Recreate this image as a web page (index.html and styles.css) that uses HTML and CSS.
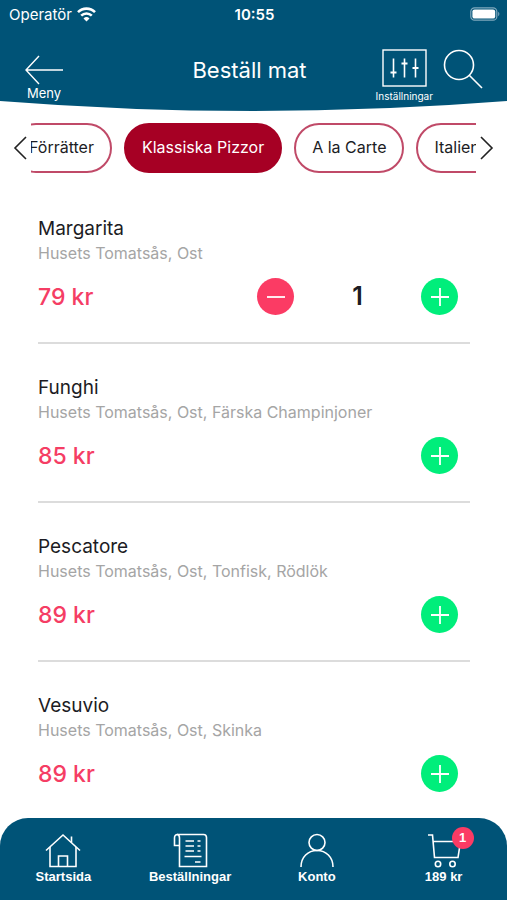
FILE: index.html
```html
<!DOCTYPE html>
<html lang="sv">
<head>
    <meta charset="UTF-8">
    <meta name="viewport" content="width=device-width, initial-scale=1.0">
    <title>Beställ mat</title>
    <link rel="stylesheet" href="styles.css">
</head>
<body>

<header class="header">
    <div class="status-bar">
        <span class="carrier">Operatör
            <svg width="19" height="15" viewBox="0 0 19 15" fill="none" stroke="#fff" stroke-width="2.6">
                <path d="M1 5.2a12 12 0 0 1 17 0"/>
                <path d="M4.2 8.6a7.6 7.6 0 0 1 10.6 0"/>
                <path d="M9.5 14.6L6.5 11.4a4.3 4.3 0 0 1 6 0z" fill="#fff" stroke="none"/>
            </svg>
        </span>
        <span class="clock">10:55</span>
        <span class="battery">
            <svg width="30" height="14" viewBox="0 0 30 14">
                <rect x="0.8" y="0.8" width="26" height="12.4" rx="3.8" fill="none" stroke="#7fa9bd" stroke-width="1.2"/>
                <rect x="2.4" y="2.4" width="22.8" height="9.2" rx="2.2" fill="#fff"/>
                <path d="M28.2 4.8c1.6 0.7 1.6 3.7 0 4.4z" fill="#7fa9bd"/>
            </svg>
        </span>
    </div>
    <div class="nav-bar">
        <button class="nav-button menu-button" type="button">
            <svg width="40" height="30" viewBox="0 0 40 30" fill="none" stroke="#fff" stroke-width="1.4">
                <path d="M39 15H2M15 1L2 15l13 14"/>
            </svg>
            <span>Meny</span>
        </button>
        <h1>Beställ mat</h1>
        <div class="nav-actions">
            <button class="nav-button settings-button" type="button">
                <svg width="45" height="38" viewBox="0 0 45 38" fill="none" stroke="#fff" stroke-width="1.4">
                    <rect x="1" y="1" width="43" height="36"/>
                    <path d="M11.5 9.5v19M22.5 9.5v19M33.5 9.5v19" stroke-width="1.6"/>
                    <path d="M8.5 23.5h6M19.5 14.5h6M30.5 19h6" stroke-width="2"/>
                </svg>
                <span>Inställningar</span>
            </button>
            <button class="nav-button search-button" type="button" aria-label="Sök">
                <svg width="40" height="40" viewBox="0 0 40 40" fill="none" stroke="#fff" stroke-width="1.6">
                    <circle cx="16" cy="16" r="14.500"/>
                    <path d="M26 26l13 13"/>
                </svg>
            </button>
        </div>
    </div>
</header>
<svg class="curve" viewBox="0 0 100 10" preserveAspectRatio="none">
    <path d="M0 0Q50 20 100 0z" fill="#005377"/>
</svg>

<nav class="categories">
    <button class="scroll-button" type="button" aria-label="Föregående">
        <svg width="14" height="24" viewBox="0 0 14 24" fill="none" stroke="#222" stroke-width="1.6">
            <path d="M13 1L2 12l11 11"/>
        </svg>
    </button>
    <div class="category-list">
        <button class="category" type="button">Förrätter</button>
        <button class="category active" type="button">Klassiska Pizzor</button>
        <button class="category" type="button">A la Carte</button>
        <button class="category" type="button">Italienska</button>
    </div>
    <button class="scroll-button" type="button" aria-label="Nästa">
        <svg width="14" height="24" viewBox="0 0 14 24" fill="none" stroke="#222" stroke-width="1.6">
            <path d="M1 1l11 11L1 23"/>
        </svg>
    </button>
</nav>

<main class="dishes">
    <article class="dish">
        <h2>Margarita</h2>
        <p>Husets Tomatsås, Ost</p>
        <div class="dish-row">
            <span class="price">79 kr</span>
            <div class="counter">
                <button class="round minus" type="button" aria-label="Ta bort Margarita"><svg width="20" height="20" viewBox="0 0 20 20"><path d="M1 10h18" stroke="#fff" stroke-width="1.8"/></svg></button>
                <span class="quantity">1</span>
                <button class="round plus" type="button" aria-label="Lägg till Margarita"><svg width="20" height="20" viewBox="0 0 20 20"><path d="M1 10h18M10 1v18" stroke="#fff" stroke-width="1.8"/></svg></button>
            </div>
        </div>
    </article>
    <article class="dish">
        <h2>Funghi</h2>
        <p>Husets Tomatsås, Ost, Färska Champinjoner</p>
        <div class="dish-row">
            <span class="price">85 kr</span>
            <button class="round plus" type="button" aria-label="Lägg till Funghi"><svg width="20" height="20" viewBox="0 0 20 20"><path d="M1 10h18M10 1v18" stroke="#fff" stroke-width="1.8"/></svg></button>
        </div>
    </article>
    <article class="dish">
        <h2>Pescatore</h2>
        <p>Husets Tomatsås, Ost, Tonfisk, Rödlök</p>
        <div class="dish-row">
            <span class="price">89 kr</span>
            <button class="round plus" type="button" aria-label="Lägg till Pescatore"><svg width="20" height="20" viewBox="0 0 20 20"><path d="M1 10h18M10 1v18" stroke="#fff" stroke-width="1.8"/></svg></button>
        </div>
    </article>
    <article class="dish">
        <h2>Vesuvio</h2>
        <p>Husets Tomatsås, Ost, Skinka</p>
        <div class="dish-row">
            <span class="price">89 kr</span>
            <button class="round plus" type="button" aria-label="Lägg till Vesuvio"><svg width="20" height="20" viewBox="0 0 20 20"><path d="M1 10h18M10 1v18" stroke="#fff" stroke-width="1.8"/></svg></button>
        </div>
    </article>
</main>

<nav class="tab-bar">
    <a class="tab" href="#start">
        <svg width="36" height="36" viewBox="0 0 36 36" fill="none" stroke="#fff" stroke-width="1.6">
            <path d="M1 17.500L18 2l17 15.500"/>
            <path d="M5 14v19.500h26V14"/>
            <path d="M13.500 33.500V23h9v10.500M26.500 9.500V3.500"/>
        </svg>
        <span>Startsida</span>
    </a>
    <a class="tab" href="#bestallningar">
        <svg width="36" height="36" viewBox="0 0 36 36" fill="none" stroke="#fff" stroke-width="1.6">
            <path d="M7.500 12.500H2.500V5c0-2 1-3.500 3-3.500h26c2 0 3 1.200 3 3v29h-27V5c0-2-0.800-3.500-2.500-3.500"/>
            <path d="M13.500 8H22M25.500 8h3M13.500 13H22M25.500 13h3M13.500 18H22M25.500 18h3M12.500 23.500h17M23 29h5.500"/>
        </svg>
        <span>Beställningar</span>
    </a>
    <a class="tab" href="#konto">
        <svg width="36" height="36" viewBox="0 0 36 36" fill="none" stroke="#fff" stroke-width="1.6">
            <circle cx="18" cy="9.500" r="8"/>
            <path d="M2 34C2 24 9 17.500 18 17.500S34 24 34 34"/>
        </svg>
        <span>Konto</span>
    </a>
    <a class="tab" href="#varukorg">
        <span class="cart">
            <svg width="36" height="36" viewBox="0 0 36 36" fill="none" stroke="#fff" stroke-width="1.6">
                <path d="M2 2h4.500L8.500 24.500h23.500L34.500 8.500H7"/>
                <circle cx="12" cy="31" r="2.700"/>
                <circle cx="26.500" cy="31" r="2.700"/>
            </svg>
            <span class="badge">1</span>
        </span>
        <span>189 kr</span>
    </a>
</nav>

</body>
</html>
```

FILE: styles.css
```css
* {
    box-sizing: border-box;
}
body {
    margin: 0;
    height: 100vh;
    display: flex;
    flex-direction: column;
    background-color: #fff;
    color: #1c1c24;
    font-family: Inter, "Liberation Sans", sans-serif;
}
button {
    padding: 0;
    border: none;
    background: none;
    color: inherit;
    font-family: inherit;
    cursor: pointer;
}
svg {
    display: block;
    flex: none;
}
h1, h2, p {
    margin: 0;
    font-weight: 400;
}

/* Header */
.header {
    position: relative;
    z-index: 1;
    background-color: #005377;
    color: #fff;
    flex: none;
}
.status-bar {
    display: grid;
    grid-template-columns: 1fr auto 1fr;
    align-items: center;
    height: 28px;
    padding: 0 7px 0 9px;
    font-size: 15px;
}
.carrier {
    display: flex;
    align-items: center;
    gap: 5px;
}
.clock {
    font-weight: 600;
}
.battery {
    justify-self: end;
}
.nav-bar {
    display: grid;
    grid-template-columns: 1fr auto 1fr;
    align-items: start;
    height: 73px;
    padding: 21px 24px 0;
}
.nav-bar h1 {
    margin-right: 8px;
    font-size: 22px;
    line-height: 42px;
}
.nav-button {
    display: flex;
    flex-direction: column;
    align-items: center;
}
.menu-button {
    justify-self: start;
    padding-top: 6px;
    font-size: 13px;
    line-height: 17px;
}
.nav-actions {
    justify-self: end;
    display: flex;
    gap: 10px;
}
.settings-button {
    gap: 3px;
    font-size: 10px;
    line-height: 12px;
}
.curve {
    width: 100%;
    height: 10px;
}

/* Categories */
.categories {
    display: flex;
    align-items: center;
    gap: 4px;
    padding: 12px 13px 0;
    flex: none;
}
.category-list {
    flex: 1;
    display: flex;
    gap: 12px;
    overflow: hidden;
}
.category {
    flex: none;
    height: 50px;
    padding: 0 16px 2px;
    border: 2px solid #c04a68;
    border-radius: 25px;
    font-size: 16px;
    white-space: nowrap;
}
.category:first-child {
    margin-left: -20px;
}
.category.active {
    background-color: #a60024;
    border-color: #a60024;
    color: #fff;
}

/* Dishes */
.dishes {
    flex: 1;
    min-height: 0;
    overflow: hidden;
    padding: 12px 37px 0 38px;
}
.dish {
    padding: 31px 12px 27px 0;
    border-bottom: 2px solid #dcdcdc;
}
.dish h2 {
    font-size: 19px;
    line-height: 25px;
}
.dish p {
    color: #a5a5a5;
    font-size: 16px;
    line-height: 25px;
}
.dish-row {
    display: flex;
    justify-content: space-between;
    align-items: center;
    padding-top: 12px;
}
.price {
    color: #f53d64;
    font-size: 23px;
    font-weight: 500;
}
.counter {
    display: flex;
    align-items: center;
}
.quantity {
    width: 127px;
    text-align: center;
    font-size: 25px;
    line-height: 37px;
    font-weight: 600;
}
.round {
    display: flex;
    align-items: center;
    justify-content: center;
    width: 37px;
    height: 37px;
    border-radius: 50%;
}
.minus {
    background-color: #fb3b64;
}
.plus {
    background-color: #00ee7b;
}

/* Tab bar */
.tab-bar {
    display: flex;
    flex: none;
    height: 82px;
    padding-top: 15px;
    background-color: #005377;
    border-radius: 28px 28px 0 0;
}
.tab {
    flex: 1;
    display: flex;
    flex-direction: column;
    align-items: center;
    color: #fff;
    font-family: "Liberation Sans", Arial, sans-serif;
    font-size: 13px;
    font-weight: 700;
    line-height: 16px;
    text-decoration: none;
}
.cart {
    position: relative;
}
.badge {
    position: absolute;
    top: -6px;
    right: -12px;
    width: 22px;
    border-radius: 50%;
    background-color: #fb3b64;
    line-height: 22px;
    text-align: center;
}
```
